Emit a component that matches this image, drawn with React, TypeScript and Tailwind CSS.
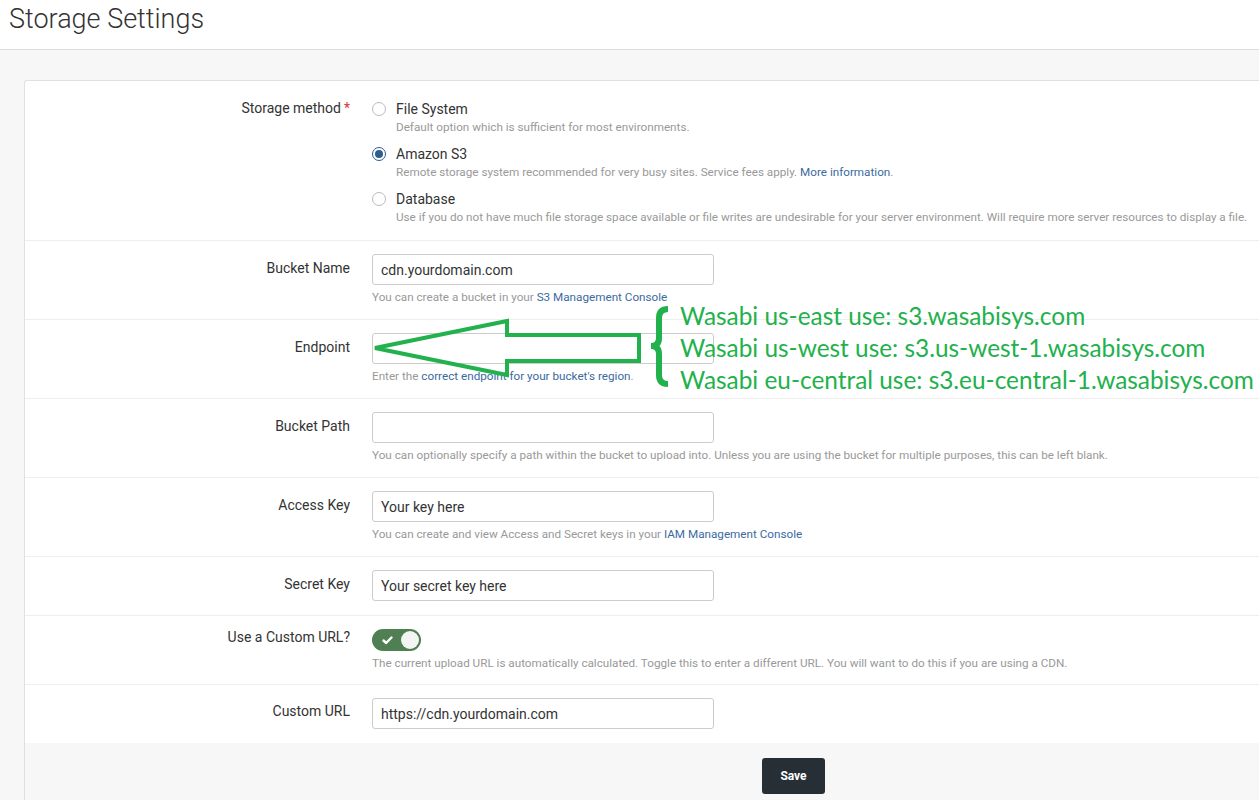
import React from 'react';

const font = { fontFamily: 'Roboto, "Liberation Sans", sans-serif' };

type RowProps = {
  label: string;
  required?: boolean;
  labelPt?: string;
  children: React.ReactNode;
  last?: boolean;
};

const Row: React.FC<RowProps> = ({ label, required, labelPt = 'pt-[17px]', children, last }) => (
  <div className={`flex ${last ? '' : 'border-b border-[#eeeeee]'}`}>
    <div className={`w-[347px] shrink-0 pr-[22px] ${labelPt} text-right text-[14px] leading-[20px] text-[#333]`}>
      {label}
      {required && <span className="ml-[3px] text-[#d33]">*</span>}
    </div>
    <div className="flex-1">{children}</div>
  </div>
);

const Input: React.FC<{ value?: string }> = ({ value = '' }) => (
  <input
    readOnly
    value={value}
    className="block h-[31px] w-[342px] rounded-[3px] border border-[#cccccc] bg-white px-[8px] text-[14px] text-[#333] outline-none"
    style={font}
  />
);

const Help: React.FC<{ children: React.ReactNode }> = ({ children }) => (
  <p className="mt-[4px] whitespace-nowrap text-[11.7px] leading-[16px] text-[#999]">{children}</p>
);

const Link: React.FC<{ children: React.ReactNode }> = ({ children }) => (
  <span className="text-[#3b6aa0]">{children}</span>
);

const Radio: React.FC<{ checked?: boolean; title: string; desc: React.ReactNode }> = ({ checked, title, desc }) => (
  <div className="flex">
    <div className="pt-[3px]">
      <div
        className={`flex h-[14px] w-[14px] items-center justify-center rounded-full border ${
          checked ? 'border-[#2d5c8f]' : 'border-[#bbbbbb]'
        }`}
      >
        {checked && <div className="h-[8px] w-[8px] rounded-full bg-[#2d5c8f]" />}
      </div>
    </div>
    <div className="ml-[10px]">
      <div className="text-[14px] leading-[20px] text-[#333]">{title}</div>
      <div className="whitespace-nowrap text-[11.7px] leading-[16px] text-[#999]">{desc}</div>
    </div>
  </div>
);

export default function App() {
  return (
    <div className="relative h-[800px] overflow-hidden bg-[#f7f7f7]" style={font}>
      {/* Header */}
      <div className="h-[50px] border-b border-[#dddddd] bg-white pl-[9px]">
        <h1 className="text-[27px] font-light leading-[38px] text-[#333]">Storage Settings</h1>
      </div>

      <div className="pl-[24px] pt-[30px]">
        <div className="rounded-tl-[3px] border-l border-t border-[#e0e0e0] bg-white">
          <Row label="Storage method" required>
            <div className="flex flex-col gap-[9px] pb-[15px] pt-[18px]">
              <Radio title="File System" desc="Default option which is sufficient for most environments." />
              <Radio
                checked
                title="Amazon S3"
                desc={
                  <>
                    Remote storage system recommended for very busy sites. Service fees apply. <Link>More information</Link>.
                  </>
                }
              />
              <Radio
                title="Database"
                desc="Use if you do not have much file storage space available or file writes are undesirable for your server environment. Will require more server resources to display a file."
              />
            </div>
          </Row>

          <Row label="Bucket Name">
            <div className="pb-[14px] pt-[13px]">
              <Input value="cdn.yourdomain.com" />
              <Help>
                You can create a bucket in your <Link>S3 Management Console</Link>
              </Help>
            </div>
          </Row>

          <Row label="Endpoint">
            <div className="pb-[14px] pt-[13px]">
              <Input />
              <Help>
                Enter the <Link>correct endpoint for your bucket's region</Link>.
              </Help>
            </div>
          </Row>

          <Row label="Bucket Path">
            <div className="pb-[14px] pt-[13px]">
              <Input />
              <Help>
                You can optionally specify a path within the bucket to upload into. Unless you are using the bucket for multiple purposes, this can be left blank.
              </Help>
            </div>
          </Row>

          <Row label="Access Key">
            <div className="pb-[14px] pt-[13px]">
              <Input value="Your key here" />
              <Help>
                You can create and view Access and Secret keys in your <Link>IAM Management Console</Link>
              </Help>
            </div>
          </Row>

          <Row label="Secret Key">
            <div className="pb-[14px] pt-[13px]">
              <Input value="Your secret key here" />
            </div>
          </Row>

          <Row label="Use a Custom URL?" labelPt="pt-[11px]">
            <div className="pb-[13px] pt-[13px]">
              <div className="flex h-[22px] w-[49px] items-center justify-between rounded-full bg-[#4f7f52] pl-[10px] pr-[2px]">
                <svg width="11" height="9" viewBox="0 0 11 9">
                  <path d="M1.5 4.5 L4.2 7 L9.5 1.5" fill="none" stroke="white" strokeWidth="2.4" strokeLinecap="round" strokeLinejoin="round" />
                </svg>
                <div className="h-[18px] w-[18px] rounded-full bg-[#f4f4f4]" />
              </div>
              <Help>
                The current upload URL is automatically calculated. Toggle this to enter a different URL. You will want to do this if you are using a CDN.
              </Help>
            </div>
          </Row>

          <Row label="Custom URL" labelPt="pt-[16px]" last>
            <div className="pb-[14px] pt-[13px]">
              <Input value="https://cdn.yourdomain.com" />
            </div>
          </Row>

          {/* Footer */}
          <div className="h-[60px] bg-[#f7f7f7] pl-[737px] pt-[15px]">
            <button className="h-[36px] w-[63px] rounded-[3px] bg-[#262f36] text-[12px] font-bold text-white">Save</button>
          </div>
        </div>
      </div>

      {/* Annotation overlay */}
      <svg className="pointer-events-none absolute left-0 top-0" width="1259" height="800">
        <polygon
          points="375,348 507,321 507,335 639,335 639,361 507,361 507,375"
          fill="none"
          stroke="#22b14c"
          strokeWidth="4"
          strokeLinejoin="miter"
        />
        <path
          d="M668 309 Q659 309 659 318 L659 338 Q659 346 651 346 Q659 346 659 354 L659 375 Q659 384 668 384"
          fill="none"
          stroke="#22b14c"
          strokeWidth="6"
        />
      </svg>
      <div
        className="pointer-events-none absolute left-[680px] top-[300px] whitespace-nowrap text-[24.4px] leading-[32px] text-[#22b14c]"
        style={{ fontFamily: 'Lato, "Open Sans", sans-serif' }}
      >
        <div>Wasabi us-east use: s3.wasabisys.com</div>
        <div>Wasabi us-west use: s3.us-west-1.wasabisys.com</div>
        <div>Wasabi eu-central use: s3.eu-central-1.wasabisys.com</div>
      </div>
    </div>
  );
}
